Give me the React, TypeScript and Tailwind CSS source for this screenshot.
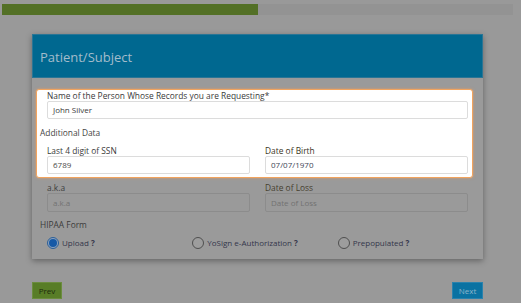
import React from "react";

function Radio({ checked, label }: { checked?: boolean; label: string }) {
  return (
    <div className="flex items-center pl-[7px] h-[12px]">
      {checked ? (
        <span className="flex h-[12px] w-[12px] items-center justify-center rounded-full border border-[#2c5f98] bg-[#8fa4bd]">
          <span className="h-[8px] w-[8px] rounded-full bg-[#1659a6]" />
        </span>
      ) : (
        <span className="h-[12px] w-[12px] rounded-full border border-[#4f4f4f] bg-[#9d9d9d]" />
      )}
      <span className="ml-[3px] text-[8px] leading-[10px] text-[#34364a]">
        {label} <b className="font-bold">?</b>
      </span>
    </div>
  );
}

export default function App() {
  return (
    <div className="w-[521px] h-[307px] bg-white overflow-hidden font-['Open_Sans',sans-serif]">
      <div className="h-[303px] bg-[#999999] pt-[4px]">
        {/* progress */}
        <div className="ml-[2px] w-[511px] h-[11px] bg-[#939393]">
          <div className="h-full w-[256px] bg-[#537026]" />
        </div>

        {/* card */}
        <div className="ml-[32px] mt-[19px] w-[451px] shadow-[0_2px_6px_rgba(0,0,0,0.35)]">
          <div className="h-[44px] bg-[#006890] border border-[#2a7595] flex items-center pl-[7px]">
            <span className="text-[13px] leading-[16px] text-[#a3bccb] mt-[1px]">Patient/Subject</span>
          </div>
          <div className="bg-[#9a9a9a] pl-[8px] pr-[7px] pt-[11px] pb-[10px]">
            {/* highlighted region */}
            <div className="ml-[-4px] mr-[3px] rounded-[3px] border border-[#f2a45e] bg-white pl-[10px] pr-[4px] pt-[1px] pb-[3px] shadow-[0_0_3px_rgba(245,160,90,0.7)]">
              <div className="text-[8.4px] leading-[10px] text-[#3a3a3a]">
                Name of the Person Whose Records you are Requesting*
              </div>
              <div className="h-[18px] rounded-[2px] border border-[#dcdcdc] pl-[5px] flex items-center text-[8px] text-[#3a3a3a]">
                John Silver
              </div>
              <div className="ml-[-7px] mt-[9px] text-[8.4px] leading-[10px] text-[#444]">Additional Data</div>
              <div className="mt-[8px] grid grid-cols-[203px_203px] gap-x-[15px]">
                <div>
                  <div className="text-[8.4px] leading-[10px] text-[#3a3a3a]">Last 4 digit of SSN</div>
                  <div className="h-[18px] rounded-[2px] border border-[#dcdcdc] pl-[5px] flex items-center text-[8px] text-[#4a4a4a]">
                    6789
                  </div>
                </div>
                <div>
                  <div className="text-[8.4px] leading-[10px] text-[#3b3525]">Date of Birth</div>
                  <div className="h-[18px] rounded-[2px] border border-[#dcdcdc] pl-[5px] flex items-center text-[8px] text-[#3c4456]">
                    07/07/1970
                  </div>
                </div>
              </div>
            </div>

            {/* dimmed fields */}
            <div className="mt-[5px] pl-[7px] grid grid-cols-[203px_203px] gap-x-[15px]">
              <div>
                <div className="text-[8.4px] leading-[10px] text-[#3e3e3e]">a.k.a</div>
                <div className="h-[19px] rounded-[2px] border border-[#8c8c8c] pl-[5px] flex items-center text-[8px] text-[#727272]">
                  a.k.a
                </div>
              </div>
              <div>
                <div className="text-[8.4px] leading-[10px] text-[#463f30]">Date of Loss</div>
                <div className="h-[19px] rounded-[2px] border border-[#8c8c8c] pl-[5px] flex items-center text-[8px] text-[#727272]">
                  Date of Loss
                </div>
              </div>
            </div>

            <div className="mt-[8px] text-[8.4px] leading-[10px] text-[#3a3a3a]">HIPAA Form</div>
            <div className="mt-[7px] grid grid-cols-3">
              <Radio checked label="Upload" />
              <Radio label="YoSign e-Authorization" />
              <Radio label="Prepopulated" />
            </div>
          </div>
        </div>

        {/* buttons */}
        <div className="ml-[32px] mt-[23px] w-[451px] flex justify-between">
          <div className="h-[17px] w-[30px] bg-[#587d27] border border-[#6b8c3e] flex items-center justify-center text-[8px] text-[#1c2a0c]">
            Prev
          </div>
          <div className="h-[17px] w-[31px] bg-[#0a72a2] border border-[#2a82ad] flex items-center justify-center text-[8px] text-[#8db5ca]">
            Next
          </div>
        </div>
      </div>
    </div>
  );
}
